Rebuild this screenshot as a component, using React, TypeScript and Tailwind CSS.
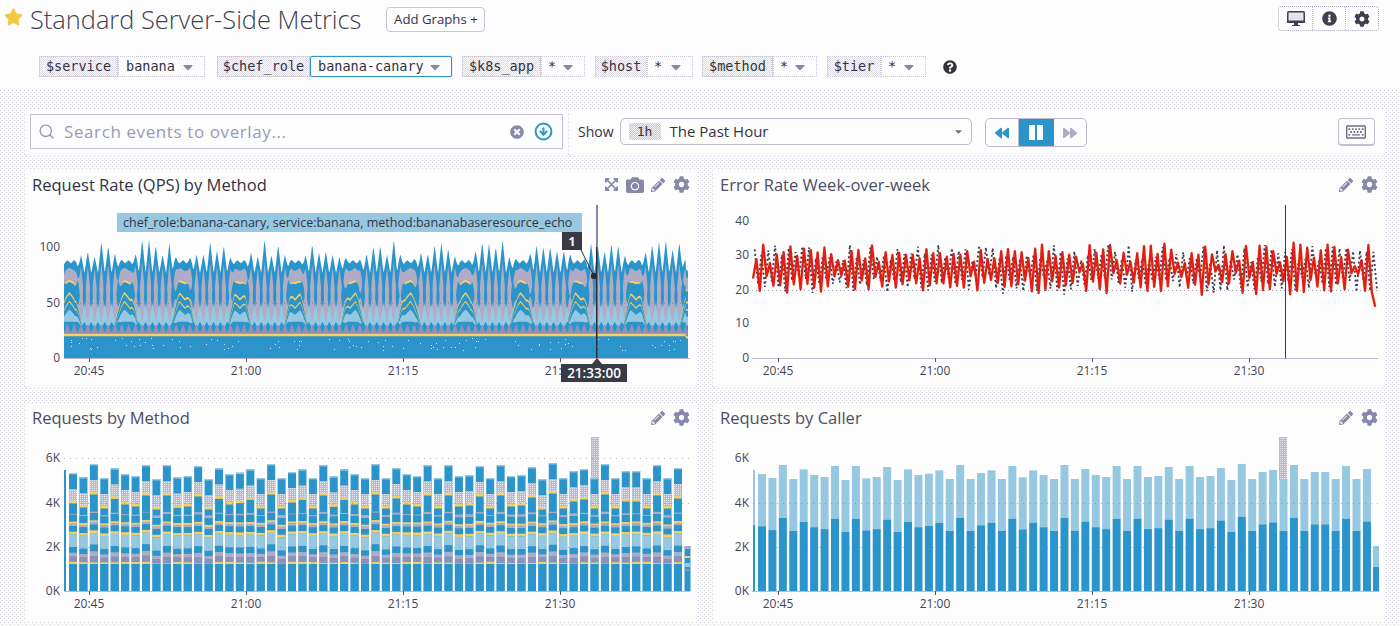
import React from "react";
import { FaStar, FaInfoCircle, FaCog, FaQuestionCircle, FaTimesCircle, FaBackward, FaForward, FaRegKeyboard, FaExpandArrowsAlt, FaCamera, FaPencilAlt, FaCaretDown } from "react-icons/fa";
import { Search, CircleArrowDown } from "lucide-react";

const BLUE = "#2b94cb";
const LIGHT = "#96c8e2";
const GRAY = "#b1acc5";
const PURPLE = "#8f90b5";
const YEL = "#f7cf63";

function rng(seed: number) {
  let s = seed;
  return () => {
    s = (s * 16807) % 2147483647;
    return (s - 1) / 2147483646;
  };
}

const xs1: number[] = [];
for (let x = 64; x <= 688; x += 0.5) xs1.push(x);
const r0 = rng(77);
const amp = Array.from({ length: 120 }, () => r0());
const tri = (p: number) => 1 - Math.abs(2 * (p - Math.floor(p)) - 1);
const humpAt = (x: number) => {
  let h = 0;
  for (let k = 0; k < 12; k++) {
    const c = 70 + 56.5 * k;
    h = Math.max(h, Math.exp(-(((x - c) / 10) ** 4)));
  }
  return h > 0.05 ? h : 0;
};
const P = 6.8;
const s0 = (x: number) => tri((x - 64) / P);
const amp0 = (x: number) => amp[Math.floor((x - 64) / P)] ?? 0.5;
const mix = (h: number, a: number, b: number) => (1 - h) * a + h * b;
const z = (x: number) => tri((x - 64) / 11);

type L = [string, (x: number, h: number) => number];
const layers: L[] = [
  [BLUE, (x, h) => mix(h, 77 + s0(x) * (15 + 16 * amp0(x)), 86 + 3 * s0(x))],
  [GRAY, (x, h) => mix(h, 52 + s0(x) * (30 + 6 * amp0(x)), 79 + 3 * z(x))],
  [YEL, (x, h) => mix(h, 28, 69 + 2 * z(x))],
  [BLUE, (x, h) => mix(h, 34 + s0(x + 3.4) * 44, 67 + 2 * z(x))],
  [GRAY, (x, h) => mix(h, 40 + s0(x) * 30, 50)],
  [LIGHT, (x, h) => mix(h, 32 + s0(x + 3.4) * 18, 40)],
  [YEL, (x, h) => mix(h, 26, 54 + 6 * z(x))],
  [BLUE, (x, h) => mix(h, 26, 52 + 6 * z(x))],
  [YEL, (x, h) => mix(h, 26, 46 + 6 * z(x))],
  [BLUE, (x, h) => mix(h, 26, 44.5 + 6 * z(x))],
  [LIGHT, (x, h) => mix(h, 26, 39 + 5 * z(x))],
  [BLUE, (x, h) => mix(h, 27 + 6 * s0(x + 3.4), 33)],
  [PURPLE, (x) => 23 + 8 * s0(x)],
  [YEL, () => 22],
  [BLUE, () => 19.8],
];
const yA = (v: number) => 358 - 1.1 * v;
const areaPaths = layers.map(([c, f]) => {
  const pts = xs1.map((x) => {
    const fade = x >= 686 ? 0.9 : 1;
    return `${x} ${yA(f(x, humpAt(x)) * fade).toFixed(1)}`;
  });
  return { c, d: `M64 358L${pts.join("L")}L688 358Z` };
});
const r1 = rng(991);
const areaDots = Array.from({ length: 110 }, () => ({ x: Math.round(66 + r1() * 620), y: Math.round(338 + r1() * 12) }));

const r2 = rng(4242);
const redPts: string[] = [];
const blackPts: string[] = [];
{
  let i = 0;
  let a = 0.6;
  for (let x = 753; x < 1378; x += 3.4, i++) {
    if (i % 2 === 0) a = r2() < 0.22 ? 0.15 + 0.2 * r2() : 0.5 + 0.5 * r2();
    const sign = i % 2 ? 1 : -1;
    const v = 26 + sign * a * 7 + (r2() - 0.5) * 1.5;
    const t = x > 1374.5 ? 15 : v;
    redPts.push(`${x.toFixed(1)},${(358 - 3.42 * t).toFixed(1)}`);
    const b = 26 + -sign * (0.3 + 0.7 * r2()) * 7 + (r2() - 0.5) * 1.5;
    blackPts.push(`${(x + 1.7).toFixed(1)},${(358 - 3.42 * b).toFixed(1)}`);
  }
}

const tops = [222,234,195,237,208,225,231,198,240,198,235,231,201,240,208,225,221,211,237,195,237,219,211,237,198,232,211,225,237,195,237,207,225,231,198,237,198,231,228,201,237,198,231,228,204,240,192,237,216,210,237,195,237,216,216,237,198,237,207];
const zy = (v: number) => 400 + v / 3;
const barX = (i: number) => 69 + i * 10.43;

const stack: [string, number, number][] = [
  [BLUE, 492, 492],
  [YEL, 488, 488],
  [PURPLE, 470, 475],
  [GRAY, 455, 465],
  [BLUE, 435, 450],
  [LIGHT, 400, 410],
  [YEL, 392, 402],
  [BLUE, 375, 385],
  [GRAY, 368, 378],
  [YEL, 362, 372],
  [BLUE, 340, 352],
  [GRAY, 335, 346],
  [YEL, 0, 0],
];

function PanelIcons({ all }: { all?: boolean }) {
  return (
    <div className="flex items-center gap-[7px] text-[#8788a9]">
      {all && <FaExpandArrowsAlt className="h-[15px] w-[15px]" />}
      {all && <FaCamera className="h-[18px] w-[18px]" />}
      <FaPencilAlt className="h-[14px] w-[14px]" />
      <FaCog className="ml-[1px] h-[17px] w-[17px]" />
    </div>
  );
}
function Panel({ title, icons, dark, vb, h, children }: { title: string; icons?: boolean; dark?: boolean; vb: string; h: string; children: React.ReactNode }) {
  return (
    <div className={`flex flex-col bg-[#fdfdfe] ${h}`}>
      <div className="flex h-[33px] shrink-0 items-center justify-between pb-[4px] pl-[7px] pr-[7px]">
        <span className={`text-[16.55px] leading-[26px] ${dark ? "text-[#33333f]" : "text-[#4d4d63]"}`}>{title}</span>
        <PanelIcons all={icons} />
      </div>
      <svg viewBox={vb} className="block w-[672px] flex-1 font-['Open_Sans',sans-serif]">
        {children}
      </svg>
    </div>
  );
}
const TL = ["20:45", "21:00", "21:15", "21:30"];
function XAxis({ dx, y, x0, x1 }: { dx: number; y: number; x0: number; x1: number }) {
  return (
    <g>
      <line x1={x0} x2={x1} y1={y + 0.5} y2={y + 0.5} stroke="#bcb7cb" />
      {TL.map((t, i) => {
        const x = 89 + dx + i * 157;
        return (
          <g key={t}>
            <line x1={x + 0.5} x2={x + 0.5} y1={y} y2={y + 4} stroke="#55556b" />
            <text x={x} y={y + 17} fontSize="12" fill="#44445a" textAnchor="middle">{t}</text>
          </g>
        );
      })}
    </g>
  );
}
function YLabels({ x, items }: { x: number; items: [string, number][] }) {
  return (
    <g>
      {items.map(([t, y]) => (
        <text key={t} x={x} y={y + 4} fontSize="12" fill="#44445a" textAnchor="end">{t}</text>
      ))}
    </g>
  );
}
function Dither({ id }: { id: string }) {
  return (
    <defs>
      <pattern id={id} width="2" height="2" patternUnits="userSpaceOnUse">
        <rect width="2" height="2" fill="#bdb7cd" />
        <rect width="1" height="1" fill="#e9e7ef" />
      </pattern>
    </defs>
  );
}

function Chart1() {
  return (
    <>
      {areaPaths.map((p, i) => <path key={i} d={p.d} fill={p.c} />)}
      {areaDots.map((d, i) => <rect key={i} x={d.x} y={d.y} width="1" height="1" fill="#cfe6f3" />)}
      <line x1="64" x2="688" y1="303.5" y2="303.5" stroke="#77778f" strokeDasharray="1 3" opacity="0.6" />
      <YLabels x={60} items={[["100", 247], ["50", 303], ["0", 358]]} />
      <XAxis dx={0} y={358} x0={64} x1={690} />
      <rect x="117" y="213" width="465" height="19" fill={LIGHT} />
      <text x="123" y="226.5" fontSize="12.5" fill="#33333f">chef_role:banana-canary, service:banana, method:bananabaseresource_echo</text>
      <rect x="596" y="205" width="2" height="42" fill="#8a88a6" />
      <rect x="596" y="247" width="1.5" height="111" fill="#2b2b36" />
      <line x1="581" y1="250" x2="594" y2="276" stroke="#2b2b36" />
      <rect x="591" y="273" width="6" height="6" rx="2" fill="#2b2b36" />
      <rect x="562" y="232" width="20" height="18" fill="#3a3a45" />
      <text x="572" y="245.5" fontSize="12" fontWeight="700" fill="#fff" textAnchor="middle">1</text>
      <path d="M592 364L597 358L602 364Z" fill="#3a3a45" />
      <rect x="561" y="364" width="66" height="18" fill="#3a3a45" />
      <text x="594" y="377.5" fontSize="13.5" fontWeight="600" fill="#fff" textAnchor="middle">21:33:00</text>
    </>
  );
}
function Chart2() {
  return (
    <>
      <line x1="752" x2="1378" y1="290.5" y2="290.5" stroke="#9a97ae" strokeDasharray="1 3" />
      <polyline points={redPts.join(" ")} fill="none" stroke="#f1c232" strokeWidth="3" opacity="0.45" />
      <polyline points={blackPts.join(" ")} fill="none" stroke="#3a3a4c" strokeWidth="1.8" strokeDasharray="2 2.5" />
      <polyline points={redPts.join(" ")} fill="none" stroke="#e21c1c" strokeWidth="2.2" strokeLinejoin="round" />
      <YLabels x={749} items={[["40", 221], ["30", 255], ["20", 290], ["10", 323], ["0", 358]]} />
      <line x1="1285.5" x2="1285.5" y1="205" y2="358" stroke="#3a3a45" />
      <XAxis dx={689} y={358} x0={752} x1={1378} />
    </>
  );
}
function Chart3() {
  const r = rng(2024);
  return (
    <>
      <Dither id="d3" />
      <rect x="591" y="437" width="8" height="43" fill="url(#d3)" />
      <rect x="64" y={zy(210)} width="2" height={591 - zy(210)} fill={BLUE} />
      {tops.map((top, i) => {
        const t = Math.max(0, Math.min(1, (240 - top) / 45));
        const x = barX(i);
        const j = (r() - 0.5) * 6;
        const h = zy(top);
        return (
          <g key={i}>
            <rect x={x} y={h - 1} width="8" height={592 - h} fill={BLUE} />
            <rect x={x} y={h - 1} width="8" height="1.4" fill={LIGHT} />
            <rect x={x} y={h + 15} width="8" height="12.5" fill="url(#d3)" />
            <rect x={x} y={h + 27} width="8" height="2.5" fill={YEL} />
            {stack.slice(0, 12).reverse().map(([c, a, b], k) => {
              const v = b + (a - b) * t + (k > 0 && k < 11 ? j : 0);
              const next = 12 - k - 1;
              const bottom = next === 0 ? 575 : stack[next - 1][2] + (stack[next - 1][1] - stack[next - 1][2]) * t + (next > 1 ? j : 0);
              return <rect key={k} x={x} y={zy(v)} width="8" height={Math.max(0, (bottom - v) / 3)} fill={c} />;
            })}
          </g>
        );
      })}
      <rect x="684.5" y="546" width="6" height="45" fill={BLUE} />
      <rect x="684.5" y="546" width="6" height="3" fill={GRAY} />
      <rect x="684.5" y="556" width="6" height="2" fill={YEL} />
      <rect x="684.5" y="563" width="6" height="4" fill={LIGHT} />
      <rect x="684.5" y="569" width="6" height="2" fill={PURPLE} />
      {[547, 503, 458].map((y) => <line key={y} x1="64" x2="690" y1={y + 0.5} y2={y + 0.5} stroke="#77778f" strokeDasharray="1 5" opacity="0.55" />)}
      <YLabels x={60} items={[["6K", 458], ["4K", 503], ["2K", 547], ["0K", 591]]} />
      <XAxis dx={0} y={591} x0={64} x1={690} />
    </>
  );
}
function Chart4() {
  return (
    <>
      <Dither id="d4" />
      <rect x="1279" y="437" width="8" height="43" fill="url(#d4)" />
      <rect x="753" y={zy(210)} width="2" height={525 - zy(210)} fill={LIGHT} />
      <rect x="753" y="525" width="2" height="66" fill={BLUE} />
      {tops.map((top, i) => {
        const x = barX(i) + 689;
        const h = zy(top);
        const split = zy(393 - (237 - top) * 0.95);
        return (
          <g key={i}>
            <rect x={x} y={h} width="8" height={split - h} fill={LIGHT} />
            <rect x={x} y={split} width="8" height={591.5 - split} fill={BLUE} />
          </g>
        );
      })}
      <rect x="1373" y="546" width="6" height="21" fill={LIGHT} />
      <rect x="1373" y="567" width="6" height="24.5" fill={BLUE} />
      {[547, 503].map((y) => <line key={y} x1="753" x2="1378" y1={y + 0.5} y2={y + 0.5} stroke="#77778f" strokeDasharray="1 5" opacity="0.55" />)}
      <YLabels x={749} items={[["6K", 458], ["4K", 503], ["2K", 547], ["0K", 591]]} />
      <XAxis dx={689} y={591} x0={752} x1={1379} />
    </>
  );
}

const labelCls = "flex h-[21px] items-center justify-center border border-dotted border-[#c9c6d6] bg-[conic-gradient(#dedbe6_25%,#fdfdfe_0_50%,#dedbe6_0_75%,#fdfdfe_0)] bg-[length:2px_2px] text-[#33333f]";

function Var({ name, lw, value, vw, active, pl }: { name: string; lw: string; value: string; vw: string; active?: boolean; pl?: string }) {
  return (
    <div className="flex items-center">
      <div className={`${labelCls} ${lw}`}>{name}</div>
      <div className={`flex h-[21px] items-center justify-between pr-[8px] ${pl ?? "pl-[7px]"} ${vw} ${active ? "rounded-[2px] border border-[#2b94cb] text-[#33333f] shadow-[0_0_1px_#2b94cb]" : "border border-dotted border-[#c9c6d6] text-[#33333f]"}`}>
        <span>{value}</span>
        <FaCaretDown className="h-[16px] w-[16px] text-[#8788a9]" />
      </div>
    </div>
  );
}

export default function App() {
  return (
    <div className="flex h-[626px] w-[1400px] flex-col overflow-hidden bg-[#fdfdfe] font-['Open_Sans',sans-serif] text-[#33333f]">
      <header className="h-[90px] shrink-0">
        <div className="flex h-[39px] items-start">
          <FaStar className="ml-[4px] mt-[8px] h-[18px] w-[19px] text-[#f5c842]" />
          <h1 className="ml-[7px] mt-[1px] text-[25.4px] font-light leading-[36px] text-[#3f3f50]">Standard Server-Side Metrics</h1>
          <button className="ml-[25px] mt-[7px] h-[25px] w-[99px] rounded-[4px] border border-[#c9c6d6] text-[13.2px] text-[#33333f]">Add Graphs +</button>
          <div className="ml-auto mr-[21px] mt-[6px] flex h-[25px] w-[101px] rounded-[4px] border border-dotted border-[#a9a6bc] text-[#3f3f50]">
            <div className="flex w-[34px] items-center justify-center border-r border-dotted border-[#b9b6c8]">
              <svg viewBox="0 0 18 17" className="h-[17px] w-[18px]">
                <rect x="0.75" y="1.75" width="16.5" height="10.5" rx="1" fill="#e4e3ea" stroke="#3f3f50" strokeWidth="1.5" />
                <rect x="0" y="10.5" width="18" height="2.5" fill="#3f3f50" />
                <rect x="7" y="13" width="4" height="2" fill="#3f3f50" />
                <rect x="5" y="15" width="8" height="1" fill="#3f3f50" />
              </svg>
            </div>
            <div className="flex w-[33px] items-center justify-center border-r border-dotted border-[#b9b6c8]"><FaInfoCircle className="h-[15px] w-[15px]" /></div>
            <div className="flex flex-1 items-center justify-center"><FaCog className="h-[16px] w-[16px]" /></div>
          </div>
        </div>
        <div className="ml-[39px] mt-[17px] flex items-center font-['DejaVu_Sans_Mono',monospace] text-[13.5px]">
          <Var name="$service" lw="w-[79px]" value="banana" vw="w-[87px]" />
          <div className="ml-[12px]"><Var name="$chef_role" lw="w-[93px]" value="banana-canary" vw="w-[142px]" active /></div>
          <div className="ml-[10px]"><Var name="$k8s_app" lw="w-[79px]" value="*" vw="w-[44px]" pl="pl-[6px]" /></div>
          <div className="ml-[10px]"><Var name="$host" lw="w-[52px]" value="*" vw="w-[46px]" pl="pl-[6px]" /></div>
          <div className="ml-[9px]"><Var name="$method" lw="w-[71px]" value="*" vw="w-[44px]" pl="pl-[6px]" /></div>
          <div className="ml-[10px]"><Var name="$tier" lw="w-[54px]" value="*" vw="w-[45px]" pl="pl-[6px]" /></div>
          <FaQuestionCircle className="ml-[17px] h-[14px] w-[14px] text-[#33333f]" />
        </div>
      </header>
      <main className="flex-1 bg-[radial-gradient(circle_at_0.5px_0.5px,#d2cfdc_0.5px,transparent_1px),radial-gradient(circle_at_2.5px_2.5px,#d2cfdc_0.5px,#fdfdfe_1px)] bg-[length:4px_4px] pl-[25px] pr-[15px] pt-[20px]">
        <div className="flex h-[45px] gap-px">
          <div className="w-[543px] bg-[#fdfdfe] pl-[5px] pt-[4px]">
            <div className="flex h-[35px] w-[533px] items-center border border-[#c4c0d2] pl-[7px] pr-[9px]">
              <Search className="h-[17px] w-[17px] text-[#9b9ab5]" strokeWidth={2} />
              <span className="ml-[9px] text-[17px] tracking-[0.6px] text-[#9b9ab5]">Search events to overlay...</span>
              <FaTimesCircle className="ml-auto h-[14px] w-[14px] text-[#8788a9]" />
              <CircleArrowDown className="ml-[10px] h-[19px] w-[19px] text-[#2b94cb]" strokeWidth={2.5} />
            </div>
          </div>
          <div className="flex flex-1 items-start bg-[#fdfdfe] pt-[8px]">
            <span className="ml-[9px] mt-[3px] text-[14px]">Show</span>
            <div className="ml-[6px] flex h-[27px] w-[352px] items-center rounded-[5px] border border-[#bdb9cc] pl-[8px] pr-[7px]">
              <span className="flex h-[17px] w-[32px] items-center justify-center rounded-[2px] bg-[conic-gradient(#c9c6d6_25%,#f2f1f5_0_50%,#c9c6d6_0_75%,#f2f1f5_0)] bg-[length:2px_2px] font-['DejaVu_Sans_Mono',monospace] text-[13px]">1h</span>
              <span className="ml-[9px] text-[15px] text-[#33333f]">The Past Hour</span>
              <FaCaretDown className="ml-auto h-[11px] w-[11px] text-[#6c6c85]" />
            </div>
            <div className="ml-[13px] flex h-[29px] w-[102px] overflow-hidden rounded-[5px] border border-[#bdb9cc]">
              <div className="flex w-[33px] items-center justify-center border-r border-[#bdb9cc]"><FaBackward className="h-[14px] w-[14px] text-[#2b94cb]" /></div>
              <div className="flex w-[35px] items-center justify-center gap-[2px] bg-[#2b94cb]">
                <span className="h-[15px] w-[6px] bg-[#fdfdfe]" />
                <span className="h-[15px] w-[6px] bg-[#fdfdfe]" />
              </div>
              <div className="flex flex-1 items-center justify-center"><FaForward className="h-[14px] w-[14px] text-[#b1acc5]" /></div>
            </div>
            <div className="ml-[251px] flex h-[28px] w-[37px] items-center justify-center rounded-[4px] border border-b-2 border-[#c4c0d2]">
              <FaRegKeyboard className="h-[18px] w-[20px] text-[#6c6c85]" />
            </div>
          </div>
        </div>
        <div className="mt-[15px] grid w-[1360px] grid-cols-[672px_672px] gap-x-[16px] gap-y-[15px]">
          <Panel title="Request Rate (QPS) by Method" icons dark vb="25 203 672 185" h="h-[218px]"><Chart1 /></Panel>
          <Panel title="Error Rate Week-over-week" vb="713 203 672 185" h="h-[218px]"><Chart2 /></Panel>
          <Panel title="Requests by Method" vb="25 436 672 186" h="h-[219px]"><Chart3 /></Panel>
          <Panel title="Requests by Caller" vb="713 436 672 186" h="h-[219px]"><Chart4 /></Panel>
        </div>
      </main>
    </div>
  );
}
